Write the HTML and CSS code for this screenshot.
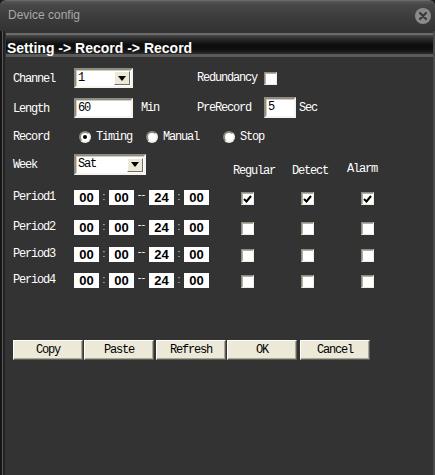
FILE: index.html
```html
<!DOCTYPE html>
<html>
<head>
<meta charset="utf-8">
<link rel="stylesheet" href="styles.css">
</head>
<body>
<div class="window">
  <div class="titlebar">
    <span class="title">Device config</span>
    <span class="close"><svg width="16" height="16" viewBox="0 0 16 16"><circle cx="8" cy="8" r="8" fill="#8a8a8a"/><path d="M5 5 L11 11 M11 5 L5 11" stroke="#3a3a3a" stroke-width="2.2" stroke-linecap="round"/></svg></span>
  </div>
  <div class="frame">
    <div class="crumb">Setting -&gt; Record -&gt; Record</div>
    <div class="content">
      <div class="row r-channel">
        <span class="lbl">Channel</span>
        <div class="mid">
          <div class="select w59"><span class="val">1</span><span class="drop"><svg width="8" height="5" viewBox="0 0 8 5"><path d="M0 0 H8 L4 5 Z" fill="#000"/></svg></span></div>
        </div>
        <span class="lbl2">Redundancy</span>
        <span class="chk"></span>
      </div>
      <div class="row r-length">
        <span class="lbl">Length</span>
        <div class="mid">
          <div class="input w59">60</div><span class="unit">Min</span>
        </div>
        <span class="lbl2">PreRecord</span>
        <div class="input w32">5</div><span class="unit u-sec">Sec</span>
      </div>
      <div class="row r-record">
        <span class="lbl">Record</span>
        <span class="radio on r1"></span><span class="rtxt">Timing</span>
        <span class="radio r2"></span><span class="rtxt">Manual</span>
        <span class="radio r3"></span><span class="rtxt">Stop</span>
      </div>
      <div class="row r-week">
        <span class="lbl wk">Week</span>
        <div class="select w72"><span class="val">Sat</span><span class="drop"><svg width="8" height="5" viewBox="0 0 8 5"><path d="M0 0 H8 L4 5 Z" fill="#000"/></svg></span></div>
        <span class="hdr h-reg">Regular</span>
        <span class="hdr h-det">Detect</span>
        <span class="hdr h-alm">Alarm</span>
      </div>
      <div class="row period p1">
        <span class="lbl">Period1</span>
        <span class="tbox">00</span><span class="colon">:</span><span class="tbox">00</span><span class="dash">--</span><span class="tbox">24</span><span class="colon">:</span><span class="tbox">00</span>
        <span class="chk on c-reg"><svg width="9" height="8" viewBox="0 0 9 8"><path d="M1 4 L3.5 6.5 L8 1" stroke="#000" stroke-width="2" fill="none"/></svg></span>
        <span class="chk on c-det"><svg width="9" height="8" viewBox="0 0 9 8"><path d="M1 4 L3.5 6.5 L8 1" stroke="#000" stroke-width="2" fill="none"/></svg></span>
        <span class="chk on c-alm"><svg width="9" height="8" viewBox="0 0 9 8"><path d="M1 4 L3.5 6.5 L8 1" stroke="#000" stroke-width="2" fill="none"/></svg></span>
      </div>
      <div class="row period p2">
        <span class="lbl">Period2</span>
        <span class="tbox">00</span><span class="colon">:</span><span class="tbox">00</span><span class="dash">--</span><span class="tbox">24</span><span class="colon">:</span><span class="tbox">00</span>
        <span class="chk c-reg"></span><span class="chk c-det"></span><span class="chk c-alm"></span>
      </div>
      <div class="row period p3">
        <span class="lbl">Period3</span>
        <span class="tbox">00</span><span class="colon">:</span><span class="tbox">00</span><span class="dash">--</span><span class="tbox">24</span><span class="colon">:</span><span class="tbox">00</span>
        <span class="chk c-reg"></span><span class="chk c-det"></span><span class="chk c-alm"></span>
      </div>
      <div class="row period p4">
        <span class="lbl">Period4</span>
        <span class="tbox">00</span><span class="colon">:</span><span class="tbox">00</span><span class="dash">--</span><span class="tbox">24</span><span class="colon">:</span><span class="tbox">00</span>
        <span class="chk c-reg"></span><span class="chk c-det"></span><span class="chk c-alm"></span>
      </div>
      <div class="buttons">
        <button class="btn">Copy</button>
        <button class="btn">Paste</button>
        <button class="btn b-ref">Refresh</button>
        <button class="btn">OK</button>
        <button class="btn b-can">Cancel</button>
      </div>
    </div>
  </div>
</div>
</body>
</html>
```

FILE: styles.css
```css
html, body {
  margin: 0;
  padding: 0;
  background: #1c1c1c;
}
.window {
  width: 435px;
  height: 475px;
  display: flex;
  flex-direction: column;
  font-family: "Liberation Mono", "DejaVu Sans Mono", monospace;
  font-size: 12px;
  letter-spacing: -1.2px;
  color: #fff;
}
.titlebar {
  height: 31px;
  flex: none;
  display: flex;
  align-items: center;
  justify-content: space-between;
  padding: 0 4px 0 8px;
  box-sizing: border-box;
  border-radius: 6px 6px 0 0;
  background: linear-gradient(#565656 0px, #474747 4px, #3c3c3c 16px, #333 30px);
  border-top: 1px solid #6a6a6a;
}
.title {
  font-family: "Liberation Sans", Arial, sans-serif;
  font-size: 12px;
  letter-spacing: 0;
  color: #a8a8a8;
  margin-top: -3px;
}
.close {
  display: flex;
  margin-top: -1px;
}
.frame {
  flex: 1;
  display: flex;
  flex-direction: column;
  background: #333333;
  border-left: 2px solid #151515;
  box-shadow: inset 1px 0 #5a5a5a, inset 3px 0 #222, inset -2px 0 #4a4a4a;
  padding-left: 4px;
  padding-right: 2px;
}
.crumb {
  margin-top: 2px;
  height: 24px;
  box-sizing: border-box;
  padding: 5px 0 0 1px;
  font-family: "Liberation Sans", Arial, sans-serif;
  font-weight: bold;
  font-size: 14px;
  letter-spacing: 0;
  color: #fff;
  border-top: 2px solid #6c6c6c;
  border-bottom: 3px solid #5a5a5a;
  background: linear-gradient(#4a4a4a 0px, #2a2a2a 4px, #0c0c0c 10px, #111 15px, #2c2c2c 19px);
}
.content {
  padding-left: 7px;
  display: flex;
  flex-direction: column;
}
.row {
  display: flex;
  align-items: center;
}
.lbl {
  width: 61px;
  flex: none;
}
.mid {
  width: 123px;
  flex: none;
  display: flex;
  align-items: center;
}
.lbl2 {
  width: 67px;
  flex: none;
}
.r-channel { margin-top: 11px; height: 20px; }
.r-length { margin-top: 9px; height: 21px; }
.r-record { margin-top: 12px; height: 14px; }
.r-week { margin-top: 10px; height: 21px; align-items: flex-start; }
.r-channel .lbl, .r-length .lbl { padding-top: 2px; }
.r-week .wk { margin-top: 4px; }

.select {
  height: 20px;
  box-sizing: border-box;
  display: flex;
  align-items: center;
  justify-content: space-between;
  background: #fff;
  border: 2px solid;
  border-color: #8f8d83 #f4f3ee #f4f3ee #8f8d83;
  box-shadow: inset 1px 1px #d0cdbf;
  color: #000;
  padding-left: 2px;
  padding-right: 1px;
}
.r-week .select { height: 21px; }
.w59 { width: 59px; }
.w72 { width: 72px; }
.w32 { width: 32px; }
.val { margin-top: -1px; }
.drop {
  width: 16px;
  height: 14px;
  box-sizing: border-box;
  background: #ece9d8;
  border: 1px solid;
  border-color: #fff #716f64 #716f64 #fff;
  display: flex;
  align-items: center;
  justify-content: center;
}
.input {
  height: 20px;
  box-sizing: border-box;
  background: #fff;
  color: #000;
  border: 2px solid;
  border-color: #8f8d83 #f4f3ee #f4f3ee #8f8d83;
  box-shadow: inset 1px 1px #d0cdbf;
  padding-left: 2px;
  line-height: 16px;
}
.r-length .w32 { height: 21px; }
.unit { margin-left: 8px; }
.u-sec { margin-left: 3px; }

.chk {
  width: 13px;
  height: 13px;
  box-sizing: border-box;
  flex: none;
  background: #fff;
  border: 1px solid;
  border-color: #8d8b80 #eeede5 #eeede5 #8d8b80;
  box-shadow: inset 1px 1px #b4b1a3;
  display: flex;
  align-items: center;
  justify-content: center;
}
.radio {
  width: 12px;
  height: 12px;
  box-sizing: border-box;
  flex: none;
  border-radius: 50%;
  background: #fff;
  border: 2px solid;
  border-color: #8d8b80 #f0efe8 #f0efe8 #8d8b80;
  display: flex;
  align-items: center;
  justify-content: center;
}
.radio.on::after {
  content: "";
  width: 4px;
  height: 4px;
  border-radius: 50%;
  background: #000;
}
.r1 { margin-left: 5px; }
.r2 { margin-left: 14px; }
.r3 { margin-left: 24px; }
.rtxt { margin-left: 5px; }

.hdr { margin-top: 10px; }
.h-reg { margin-left: 87px; }
.h-det { margin-left: 17px; }
.h-alm { margin-left: 19px; margin-top: 8px; }

.period { height: 15px; align-items: flex-start; }
.p1 { margin-top: 15px; }
.p2 { margin-top: 15px; }
.p3 { margin-top: 12px; }
.p4 { margin-top: 11px; }
.period .lbl { margin-top: 0px; }
.tbox {
  width: 25px;
  height: 15px;
  flex: none;
  background: #fff;
  color: #000;
  font-family: "Liberation Sans", Arial, sans-serif;
  font-weight: bold;
  font-size: 13px;
  letter-spacing: 0;
  line-height: 15px;
  text-align: center;
}
.colon {
  width: 10px;
  text-align: center;
  color: #ddd;
  font-family: "Liberation Sans", Arial, sans-serif;
  font-size: 10px;
  letter-spacing: 0;
  line-height: 13px;
}
.dash {
  width: 15px;
  text-align: center;
  font-family: "Liberation Sans", Arial, sans-serif;
  font-size: 11px;
  letter-spacing: 0;
  line-height: 8px;
  color: #fff;
}
.period .chk { margin-top: 2px; }
.c-reg { margin-left: 32px; }
.c-det { margin-left: 47px; }
.c-alm { margin-left: 47px; }

.buttons {
  margin-top: 52px;
  display: flex;
  gap: 1px;
}
.btn {
  width: 70px;
  height: 20px;
  box-sizing: border-box;
  margin: 0;
  padding: 0;
  background: #ece9d8;
  border: 1px solid;
  border-color: #fff #5f5e57 #5f5e57 #fff;
  box-shadow: inset -1px -1px #aca899;
  font-family: "Liberation Mono", "DejaVu Sans Mono", monospace;
  font-size: 12px;
  letter-spacing: -1.2px;
  color: #000;
}
.b-ref { margin-left: 1px; }
.b-can { margin-left: 2px; }
```
